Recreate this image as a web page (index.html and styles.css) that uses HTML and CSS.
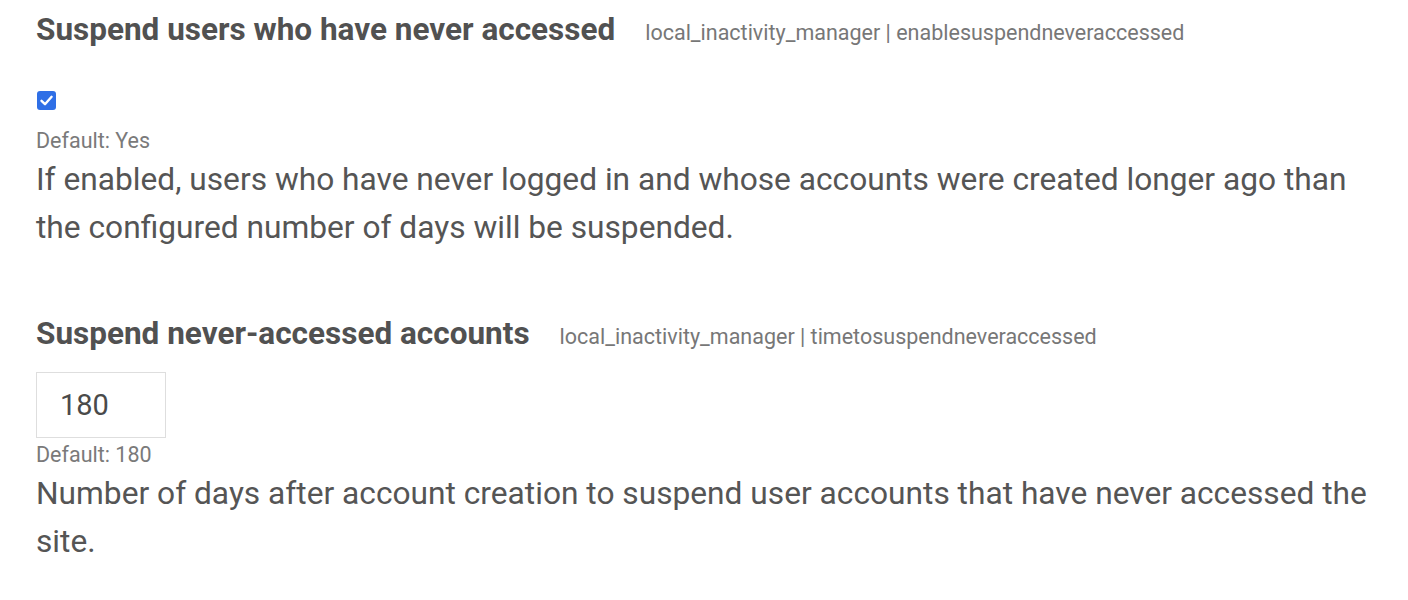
FILE: index.html
```html
<!DOCTYPE html>
<html>
<head>
<meta charset="utf-8">
<link rel="stylesheet" href="styles.css">
</head>
<body>
<div class="page">
  <section class="setting">
    <div class="setting-head">
      <h3 class="setting-title">Suspend users who have never accessed</h3>
      <span class="setting-id">local_inactivity_manager | enablesuspendneveraccessed</span>
    </div>
    <div class="control control-check">
      <span class="checkbox"><svg viewBox="0 0 19 19" width="19" height="19"><rect x="0" y="0" width="19" height="19" rx="3" fill="#2f6fe6"/><path d="M4.5 9.8 L8 13.2 L14.6 5.8" fill="none" stroke="#fff" stroke-width="2.4" stroke-linecap="round" stroke-linejoin="round"/></svg></span>
    </div>
    <div class="default">Default: Yes</div>
    <p class="desc">If enabled, users who have never logged in and whose accounts were created longer ago than the configured number of days will be suspended.</p>
  </section>
  <section class="setting second">
    <div class="setting-head">
      <h3 class="setting-title">Suspend never-accessed accounts</h3>
      <span class="setting-id">local_inactivity_manager | timetosuspendneveraccessed</span>
    </div>
    <div class="control control-input">
      <div class="textbox">180</div>
    </div>
    <div class="default">Default: 180</div>
    <p class="desc">Number of days after account creation to suspend user accounts that have never accessed the site.</p>
  </section>
</div>
</body>
</html>
```

FILE: styles.css
```css
html, body {
  margin: 0;
  padding: 0;
  background: #ffffff;
}
body {
  font-family: Roboto, "Liberation Sans", sans-serif;
  color: #555555;
}
.page {
  padding: 0 36px;
  width: 1340px;
}
.setting-head {
  display: flex;
  align-items: baseline;
  gap: 30px;
  height: 60px;
}
.setting-title {
  margin: 0;
  font-size: 31.5px;
  font-weight: 700;
  line-height: 60px;
  color: #515151;
}
.setting-id {
  font-size: 21.5px;
  color: #777777;
}
.control-check {
  padding-top: 31px;
  height: 19px;
}
.checkbox {
  display: block;
  width: 19px;
  height: 19px;
  margin-left: 1px;
}
.checkbox svg { display: block; }
.default {
  font-size: 21.5px;
  color: #7a7a7a;
  line-height: 30px;
  margin-top: 16px;
}
.desc {
  margin: 0;
  font-size: 31.7px;
  line-height: 48px;
  color: #555555;
}
.second {
  margin-top: 52px;
}
.control-input {
  padding-top: 8px;
}
.textbox {
  box-sizing: border-box;
  width: 130px;
  height: 66px;
  border: 1px solid #dedede;
  font-size: 29px;
  line-height: 64px;
  padding-left: 23px;
  color: #4a4a4a;
}
.second .default {
  margin-top: 2px;
}
```
